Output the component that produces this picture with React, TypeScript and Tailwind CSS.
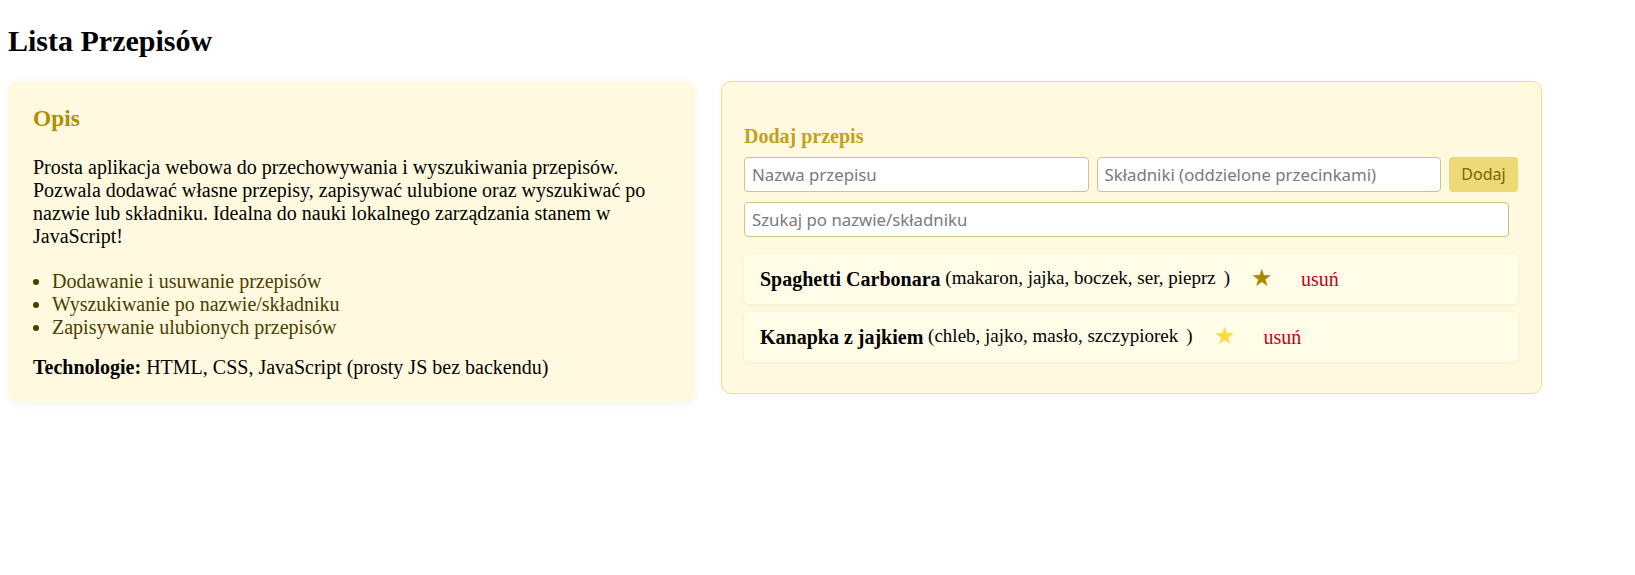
import { useState } from "react";

type Recipe = {
  id: number;
  name: string;
  ingredients: string[];
  favorite: boolean;
};

const initialRecipes: Recipe[] = [
  { id: 1, name: "Spaghetti Carbonara", ingredients: ["makaron", "jajka", "boczek", "ser", "pieprz"], favorite: true },
  { id: 2, name: "Kanapka z jajkiem", ingredients: ["chleb", "jajko", "masło", "szczypiorek"], favorite: false },
];

export default function App() {
  const [recipes, setRecipes] = useState<Recipe[]>(initialRecipes);
  const [name, setName] = useState("");
  const [ingredients, setIngredients] = useState("");
  const [query, setQuery] = useState("");

  const addRecipe = () => {
    if (!name.trim()) return;
    setRecipes((r) => [
      ...r,
      {
        id: Date.now(),
        name: name.trim(),
        ingredients: ingredients.split(",").map((s) => s.trim()).filter(Boolean),
        favorite: false,
      },
    ]);
    setName("");
    setIngredients("");
  };

  const toggleFavorite = (id: number) =>
    setRecipes((r) => r.map((x) => (x.id === id ? { ...x, favorite: !x.favorite } : x)));
  const removeRecipe = (id: number) => setRecipes((r) => r.filter((x) => x.id !== id));

  const q = query.toLowerCase();
  const visible = recipes.filter(
    (r) => r.name.toLowerCase().includes(q) || r.ingredients.some((i) => i.toLowerCase().includes(q))
  );

  return (
    <div className="min-h-screen bg-white px-2 pt-[24px] text-[20px] text-black font-['Liberation_Serif',serif]">
      <h1 className="text-[30px] font-bold leading-[34.5px] mb-[22px]">Lista Przepisów</h1>

      <div className="flex items-start gap-[26px]">
        {/* Opis */}
        <section className="w-[687px] rounded-[10px] bg-[#fffadf] pl-[25px] pr-6 pt-[24px] pb-[23px] shadow-[0_2px_10px_rgba(0,0,0,0.05)]">
          <h3 className="text-[23.4px] font-bold leading-[27px] text-[#b08f00]">Opis</h3>
          <p className="mt-[24px] leading-[23px]">
            Prosta aplikacja webowa do przechowywania i wyszukiwania przepisów. Pozwala dodawać własne przepisy,
            zapisywać ulubione oraz wyszukiwać po nazwie lub składniku. Idealna do nauki lokalnego zarządzania stanem w
            JavaScript!
          </p>
          <ul className="mt-[22px] list-disc pl-[19px] leading-[23px] text-[#4a3d00]">
            <li>Dodawanie i usuwanie przepisów</li>
            <li>Wyszukiwanie po nazwie/składniku</li>
            <li>Zapisywanie ulubionych przepisów</li>
          </ul>
          <p className="mt-[17px] leading-[23px]">
            <b>Technologie:</b> HTML, CSS, JavaScript (prosty JS bez backendu)
          </p>
        </section>

        {/* Aplikacja */}
        <section className="w-[821px] rounded-[10px] border border-[#ebe08f] bg-[#fffadf] pl-[22px] pr-[23px] pt-[43px] pb-[31px] shadow-[0_1px_6px_rgba(0,0,0,0.04)]">
          <h4 className="font-bold leading-[23px] text-[#c2a11c]">Dodaj przepis</h4>
          <div className="mt-[9px] flex gap-2 font-['Noto_Sans',sans-serif] text-[16.8px]">
            <input
              value={name}
              onChange={(e) => setName(e.target.value)}
              placeholder="Nazwa przepisu"
              className="h-[35.5px] flex-1 min-w-0 rounded-[4px] border border-[#cfc28c] bg-white px-[7px] text-black placeholder:text-[#7a7a7a] outline-none"
            />
            <input
              value={ingredients}
              onChange={(e) => setIngredients(e.target.value)}
              placeholder="Składniki (oddzielone przecinkami)"
              className="h-[35.5px] flex-1 min-w-0 rounded-[4px] border border-[#cfc28c] bg-white px-[7px] text-black placeholder:text-[#7a7a7a] outline-none"
            />
            <button
              onClick={addRecipe}
              className="h-[35.5px] w-[69px] rounded-[4px] bg-[#eed977] text-[16px] text-[#7a6408]"
            >
              Dodaj
            </button>
          </div>
          <input
            value={query}
            onChange={(e) => setQuery(e.target.value)}
            placeholder="Szukaj po nazwie/składniku"
            className="mt-[10px] block h-[34.5px] w-[765px] rounded-[4px] border border-[#cfc28c] bg-white px-[7px] font-['Noto_Sans',sans-serif] text-[16.8px] text-black placeholder:text-[#7a7a7a] outline-none"
          />

          <ul className="mt-[17px] flex flex-col gap-[8px]">
            {visible.map((r) => (
              <li
                key={r.id}
                className="flex h-[50px] items-center rounded-[5px] bg-[#fffde8] pl-[16px] shadow-[0_1px_4px_rgba(0,0,0,0.06)]"
              >
                <b>{r.name}</b>
                <span className="text-[19px]">
                  &nbsp;({r.ingredients.join(", ")}
                  <span className="ml-[8px]">)</span>
                </span>
                <button
                  onClick={() => toggleFavorite(r.id)}
                  className={`ml-[21px] -mt-[2px] text-[24px] leading-none ${r.favorite ? "text-[#a88a00]" : "text-[#ffd93d]"}`}
                >
                  ★
                </button>
                <button onClick={() => removeRecipe(r.id)} className="ml-[28px] text-[#c4001a]">
                  usuń
                </button>
              </li>
            ))}
          </ul>
        </section>
      </div>
    </div>
  );
}
